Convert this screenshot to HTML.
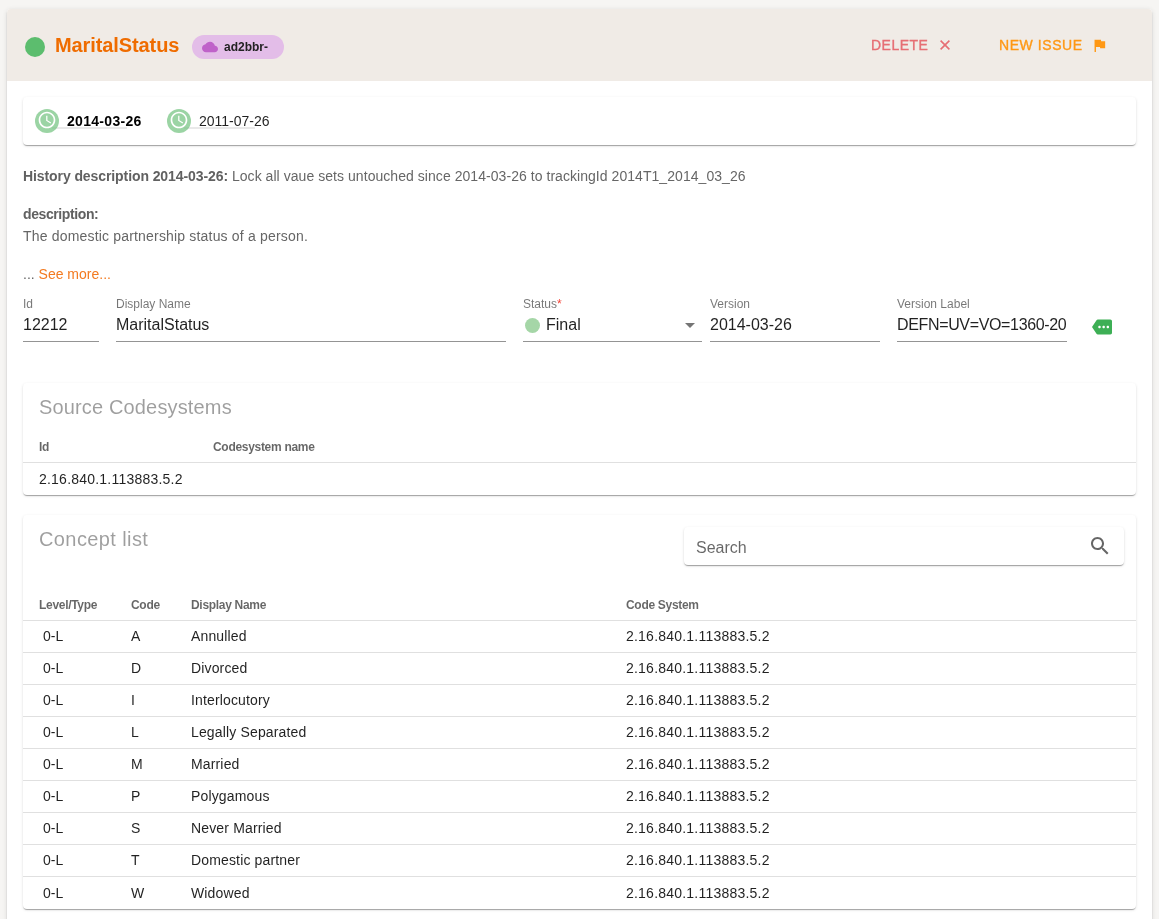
<!DOCTYPE html>
<html><head><meta charset="utf-8">
<style>
*{box-sizing:border-box;margin:0;padding:0}
body>div,body>svg{will-change:transform}
html,body{width:1159px;height:919px;overflow:hidden;background:#f6f5f3;font-family:"Liberation Sans",sans-serif;color:rgba(0,0,0,0.87)}
.a{position:absolute;white-space:nowrap;line-height:1}
#card{position:absolute;left:7px;top:9px;width:1145px;height:940px;background:#fff;border-radius:4px;
 box-shadow:0 3px 1px -2px rgba(0,0,0,0.2),0 2px 2px 0 rgba(0,0,0,0.14),0 1px 5px 0 rgba(0,0,0,0.12);overflow:hidden}
#hdr{position:absolute;left:0;top:0;width:1145px;height:72px;background:#f0ebe6}
.paper{position:absolute;background:#fff;border-radius:4px;
 box-shadow:0 2px 1px -1px rgba(0,0,0,0.2),0 1px 1px 0 rgba(0,0,0,0.14),0 1px 3px 0 rgba(0,0,0,0.12)}
.lbl{font-size:12px;color:rgba(0,0,0,0.54)}
.val{font-size:16px;color:rgba(0,0,0,0.87)}
.ul{position:absolute;height:1px;background:rgba(0,0,0,0.42)}
.th{font-size:12px;font-weight:700;color:rgba(0,0,0,0.6);letter-spacing:-0.3px}
.td{font-size:14px;color:rgba(0,0,0,0.87)}
.hr{position:absolute;left:0;width:1113px;height:1px;background:#e0e0e0}
</style></head><body>
<div id="card">
 <div id="hdr">
  <div style="position:absolute;left:18px;top:28px;width:20px;height:20px;border-radius:50%;background:#5cbd6e"></div>
  <div class="a" style="left:48px;top:26px;font-size:20px;font-weight:700;letter-spacing:-0.1px;color:#ef6c00">MaritalStatus</div>
  <div style="position:absolute;left:185px;top:26px;width:92px;height:24px;border-radius:12px;background:#e3bde8"></div>
  <svg style="position:absolute;left:195px;top:30px" width="16" height="16" viewBox="0 0 24 24"><path d="M19.35 10.04C18.67 6.59 15.64 4 12 4 9.11 4 6.6 5.64 5.35 8.04 2.34 8.36 0 10.91 0 14c0 3.31 2.69 6 6 6h13c2.76 0 5-2.24 5-5 0-2.64-2.05-4.78-4.65-4.96z" fill="#bf62c9"/></svg>
  <div class="a" style="left:217px;top:32px;font-size:12px;font-weight:700;color:#222">ad2bbr-</div>
  <div class="a" style="left:864px;top:29px;font-size:14px;letter-spacing:0.5px;-webkit-text-stroke:0.35px #e66e74;color:#e66e74">DELETE</div>
  <svg style="position:absolute;left:933px;top:31px" width="10" height="10" viewBox="0 0 10 10"><path d="M0.6 0.6L9.4 9.4M9.4 0.6L0.6 9.4" stroke="#e66e74" stroke-width="1.6"/></svg>
  <div class="a" style="left:992px;top:29px;font-size:14px;letter-spacing:0.57px;-webkit-text-stroke:0.35px #ff9814;color:#ff9814">NEW ISSUE</div>
  <svg style="position:absolute;left:1084px;top:28px" width="17" height="17" viewBox="0 0 24 24"><path d="M14.4 6L14 4H5v17h2v-7h5.6l.4 2h7V6z" fill="#ff9814"/></svg>
 </div>
</div>


<!-- date paper -->
<div class="paper" style="left:23px;top:97px;width:1113px;height:48px"></div>
<div style="position:absolute;left:52px;top:127px;width:75px;height:2px;background:#e9e9e9"></div>
<div style="position:absolute;left:184px;top:127px;width:71px;height:2px;background:#e9e9e9"></div>
<div style="position:absolute;left:35px;top:109px;width:24px;height:24px;border-radius:50%;background:rgba(112,194,126,0.7)"></div><svg style="position:absolute;left:37px;top:110.1px" width="20" height="20" viewBox="0 0 24 24"><path d="M11.99 2C6.47 2 2 6.48 2 12s4.47 10 9.99 10C17.52 22 22 17.52 22 12S17.52 2 11.99 2zM12 20c-4.42 0-8-3.58-8-8s3.58-8 8-8 8 3.58 8 8-3.58 8-8 8zm.5-13H11v6l5.25 3.15.75-1.23-4.5-2.67z" fill="#fff"/></svg>
<div style="position:absolute;left:167px;top:109px;width:24px;height:24px;border-radius:50%;background:rgba(112,194,126,0.7)"></div><svg style="position:absolute;left:169px;top:110.1px" width="20" height="20" viewBox="0 0 24 24"><path d="M11.99 2C6.47 2 2 6.48 2 12s4.47 10 9.99 10C17.52 22 22 17.52 22 12S17.52 2 11.99 2zM12 20c-4.42 0-8-3.58-8-8s3.58-8 8-8 8 3.58 8 8-3.58 8-8 8zm.5-13H11v6l5.25 3.15.75-1.23-4.5-2.67z" fill="#fff"/></svg>
<div class="a" style="left:67px;top:114px;font-size:14px;font-weight:700;color:#000;letter-spacing:0.3px">2014-03-26</div>
<div class="a" style="left:199px;top:114px;font-size:14px;color:rgba(0,0,0,0.87)">2011-07-26</div>

<!-- descriptions -->
<div class="a" style="left:23px;top:169px;font-size:14px;color:#666"><b style="color:#616161;letter-spacing:-0.09px">History description 2014-03-26:</b><span style="letter-spacing:0.05px"> Lock all vaue sets untouched since 2014-03-26 to trackingId 2014T1_2014_03_26</span></div>
<div class="a" style="left:23px;top:207px;font-size:14px;font-weight:700;color:#616161;letter-spacing:-0.4px">description:</div>
<div class="a" style="left:23px;top:229px;font-size:14px;color:#666;letter-spacing:0.18px">The domestic partnership status of a person.</div>
<div class="a" style="left:23px;top:267px;font-size:14px;color:#666">... <span style="color:#f37a20">See more...</span></div>

<!-- form -->
<div class="a lbl" style="left:23px;top:298px">Id</div>
<div class="a val" style="left:23px;top:317px">12212</div>
<div class="ul" style="left:23px;top:341px;width:76px"></div>
<div class="a lbl" style="left:116px;top:298px">Display Name</div>
<div class="a val" style="left:116px;top:317px">MaritalStatus</div>
<div class="ul" style="left:116px;top:341px;width:390px"></div>
<div class="a lbl" style="left:523px;top:298px">Status<span style="color:#f44336">*</span></div>
<div style="position:absolute;left:525px;top:318px;width:15px;height:15px;border-radius:50%;background:#a5d6a7"></div>
<div class="a val" style="left:546px;top:317px">Final</div>
<div style="position:absolute;left:685px;top:323px;width:0;height:0;border-left:5px solid transparent;border-right:5px solid transparent;border-top:5px solid rgba(0,0,0,0.54)"></div>
<div class="ul" style="left:523px;top:341px;width:179px"></div>
<div class="a lbl" style="left:710px;top:298px">Version</div>
<div class="a val" style="left:710px;top:317px">2014-03-26</div>
<div class="ul" style="left:710px;top:341px;width:170px"></div>
<div class="a lbl" style="left:897px;top:298px">Version Label</div>
<div class="a val" style="left:897px;top:317px;width:169px;overflow:hidden;letter-spacing:-0.35px">DEFN=UV=VO=1360-20141013</div>
<div class="ul" style="left:897px;top:341px;width:170px"></div>
<svg style="position:absolute;left:1092px;top:317.4px" width="20" height="20" viewBox="0 0 24 24"><path d="M22 3H7c-.69 0-1.23.35-1.59.88L0 12l5.41 8.11c.36.53.9.89 1.59.89h15c1.1 0 2-.9 2-2V5c0-1.1-.9-2-2-2zM9 13.5c-.83 0-1.5-.67-1.5-1.5s.67-1.5 1.5-1.5 1.5.67 1.5 1.5-.67 1.5-1.5 1.5zm5 0c-.83 0-1.5-.67-1.5-1.5s.67-1.5 1.5-1.5 1.5.67 1.5 1.5-.67 1.5-1.5 1.5zm5 0c-.83 0-1.5-.67-1.5-1.5s.67-1.5 1.5-1.5 1.5.67 1.5 1.5-.67 1.5-1.5 1.5z" fill="#3daf55"/></svg>

<!-- source codesystems -->
<div class="paper" style="left:23px;top:383px;width:1113px;height:112px">
 <div class="a" style="left:16px;top:14px;font-size:20px;letter-spacing:0.15px;color:rgba(0,0,0,0.38)">Source Codesystems</div>
 <div class="a th" style="left:16px;top:58px">Id</div>
 <div class="a th" style="left:190px;top:58px">Codesystem name</div>
 <div class="hr" style="top:79px"></div>
 <div class="a td" style="left:16px;top:89px"><span style="letter-spacing:0.22px">2.16.840.1.113883.5.2</span></div>
</div>

<!-- concept list -->
<div class="paper" style="left:23px;top:515px;width:1113px;height:394px;overflow:hidden" id="cl">
 <div class="a" style="left:16px;top:14px;font-size:20px;letter-spacing:0.4px;color:rgba(0,0,0,0.38)">Concept list</div>
 <div class="paper" style="left:661px;top:12px;width:440px;height:38px"></div>
 <div class="a" style="left:673px;top:25px;font-size:16px;color:rgba(0,0,0,0.6)">Search</div>
 <svg style="position:absolute;left:1065px;top:19px" width="24" height="24" viewBox="0 0 24 24"><path d="M15.5 14h-.79l-.28-.27C15.41 12.59 16 11.11 16 9.5 16 5.91 13.09 3 9.5 3S3 5.91 3 9.5 5.91 16 9.5 16c1.61 0 3.09-.59 4.23-1.57l.27.28v.79l5 4.99L20.49 19l-4.99-5zm-6 0C7.01 14 5 11.99 5 9.5S7.01 5 9.5 5 14 7.01 14 9.5 11.99 14 9.5 14z" fill="rgba(0,0,0,0.6)"/></svg>
 <div class="a th" style="left:16px;top:84px">Level/Type</div>
 <div class="a th" style="left:108px;top:84px">Code</div>
 <div class="a th" style="left:168px;top:84px">Display Name</div>
 <div class="a th" style="left:603px;top:84px">Code System</div>
 <div class="hr" style="top:105px"></div>
 <div class="a td" style="left:20px;top:114px">0-L</div><div class="a td" style="left:108px;top:114px">A</div><div class="a td" style="left:168px;top:114px;letter-spacing:0.15px">Annulled</div><div class="a td" style="left:603px;top:114px"><span style="letter-spacing:0.22px">2.16.840.1.113883.5.2</span></div>
<div class="hr" style="top:137px"></div>
 <div class="a td" style="left:20px;top:146px">0-L</div><div class="a td" style="left:108px;top:146px">D</div><div class="a td" style="left:168px;top:146px;letter-spacing:0.15px">Divorced</div><div class="a td" style="left:603px;top:146px"><span style="letter-spacing:0.22px">2.16.840.1.113883.5.2</span></div>
<div class="hr" style="top:169px"></div>
 <div class="a td" style="left:20px;top:178px">0-L</div><div class="a td" style="left:108px;top:178px">I</div><div class="a td" style="left:168px;top:178px;letter-spacing:0.15px">Interlocutory</div><div class="a td" style="left:603px;top:178px"><span style="letter-spacing:0.22px">2.16.840.1.113883.5.2</span></div>
<div class="hr" style="top:201px"></div>
 <div class="a td" style="left:20px;top:210px">0-L</div><div class="a td" style="left:108px;top:210px">L</div><div class="a td" style="left:168px;top:210px;letter-spacing:0.15px">Legally Separated</div><div class="a td" style="left:603px;top:210px"><span style="letter-spacing:0.22px">2.16.840.1.113883.5.2</span></div>
<div class="hr" style="top:233px"></div>
 <div class="a td" style="left:20px;top:242px">0-L</div><div class="a td" style="left:108px;top:242px">M</div><div class="a td" style="left:168px;top:242px;letter-spacing:0.15px">Married</div><div class="a td" style="left:603px;top:242px"><span style="letter-spacing:0.22px">2.16.840.1.113883.5.2</span></div>
<div class="hr" style="top:265px"></div>
 <div class="a td" style="left:20px;top:274px">0-L</div><div class="a td" style="left:108px;top:274px">P</div><div class="a td" style="left:168px;top:274px;letter-spacing:0.15px">Polygamous</div><div class="a td" style="left:603px;top:274px"><span style="letter-spacing:0.22px">2.16.840.1.113883.5.2</span></div>
<div class="hr" style="top:297px"></div>
 <div class="a td" style="left:20px;top:306px">0-L</div><div class="a td" style="left:108px;top:306px">S</div><div class="a td" style="left:168px;top:306px;letter-spacing:0.15px">Never Married</div><div class="a td" style="left:603px;top:306px"><span style="letter-spacing:0.22px">2.16.840.1.113883.5.2</span></div>
<div class="hr" style="top:329px"></div>
 <div class="a td" style="left:20px;top:338px">0-L</div><div class="a td" style="left:108px;top:338px">T</div><div class="a td" style="left:168px;top:338px;letter-spacing:0.15px">Domestic partner</div><div class="a td" style="left:603px;top:338px"><span style="letter-spacing:0.22px">2.16.840.1.113883.5.2</span></div>
<div class="hr" style="top:361px"></div>
 <div class="a td" style="left:20px;top:371px">0-L</div><div class="a td" style="left:108px;top:371px">W</div><div class="a td" style="left:168px;top:371px;letter-spacing:0.15px">Widowed</div><div class="a td" style="left:603px;top:371px"><span style="letter-spacing:0.22px">2.16.840.1.113883.5.2</span></div>

</div>

</body></html>
